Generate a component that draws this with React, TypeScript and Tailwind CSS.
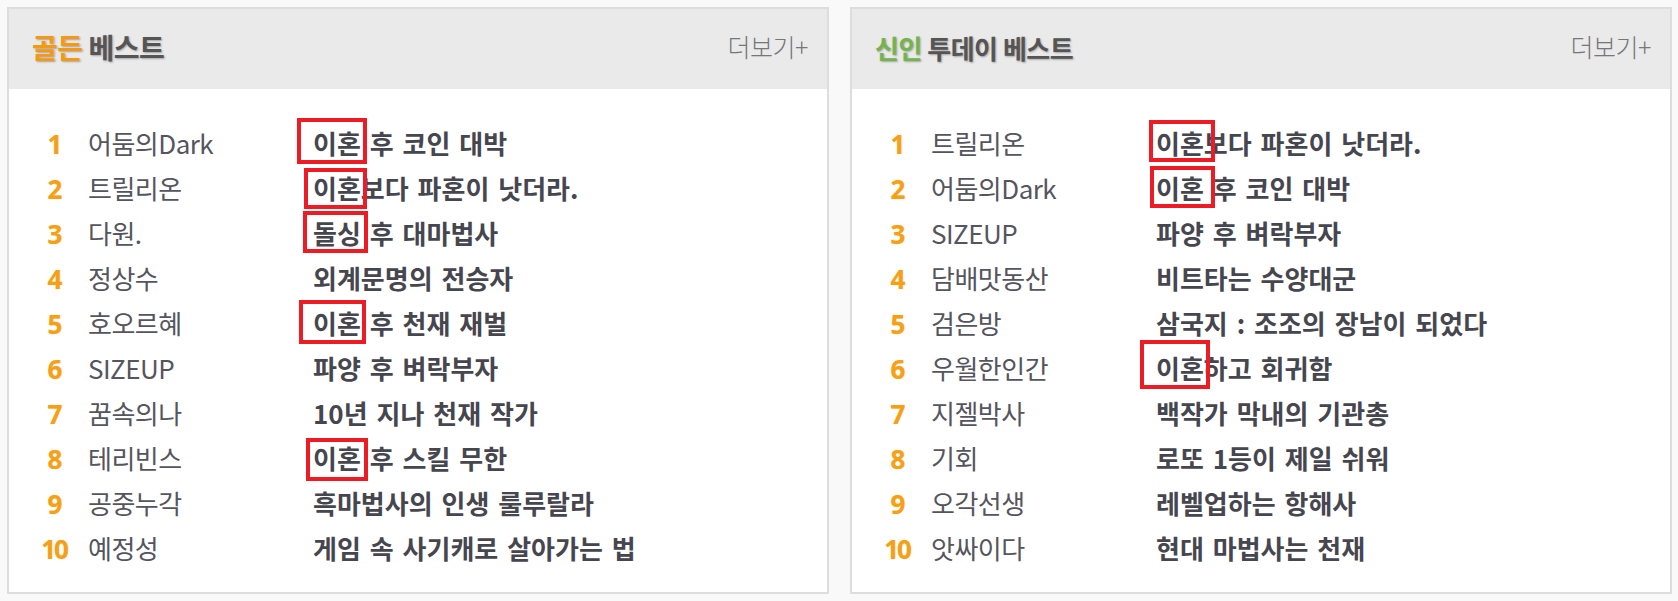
// 베스트 랭킹 패널 두 개 (골든 베스트 / 신인 투데이 베스트)

type RankItem = {
  author: string
  title: string
  // 빨간 박스 표시 (제목 앞부분 강조용)
  box?: string
}

const goldenBest: RankItem[] = [
  { author: '어둠의Dark', title: '이혼 후 코인 대박', box: 'left-[-16px] top-[-2px] w-[70px] h-[46px]' },
  { author: '트릴리온', title: '이혼보다 파혼이 낫더라.', box: 'left-[-9px] top-[3px] w-[63px] h-[41px]' },
  { author: '다원.', title: '돌싱 후 대마법사', box: 'left-[-10px] top-[1px] w-[65px] h-[42px]' },
  { author: '정상수', title: '외계문명의 전승자' },
  { author: '호오르혜', title: '이혼 후 천재 재벌', box: 'left-[-14px] top-[0px] w-[67px] h-[44px]' },
  { author: 'SIZEUP', title: '파양 후 벼락부자' },
  { author: '꿈속의나', title: '10년 지나 천재 작가' },
  { author: '테리빈스', title: '이혼 후 스킬 무한', box: 'left-[-7px] top-[3px] w-[62px] h-[43px]' },
  { author: '공중누각', title: '흑마법사의 인생 룰루랄라' },
  { author: '예정성', title: '게임 속 사기캐로 살아가는 법' },
]

const rookieBest: RankItem[] = [
  { author: '트릴리온', title: '이혼보다 파혼이 낫더라.', box: 'left-[-7px] top-[0px] w-[66px] h-[42px]' },
  { author: '어둠의Dark', title: '이혼 후 코인 대박', box: 'left-[-6px] top-[1px] w-[65px] h-[42px]' },
  { author: 'SIZEUP', title: '파양 후 벼락부자' },
  { author: '담배맛동산', title: '비트타는 수양대군' },
  { author: '검은방', title: '삼국지 : 조조의 장남이 되었다' },
  { author: '우월한인간', title: '이혼하고 회귀함', box: 'left-[-16px] top-[-5px] w-[70px] h-[49px]' },
  { author: '지젤박사', title: '백작가 막내의 기관총' },
  { author: '기회', title: '로또 1등이 제일 쉬워' },
  { author: '오각선생', title: '레벨업하는 항해사' },
  { author: '앗싸이다', title: '현대 마법사는 천재' },
]

const KR = "font-['Noto_Sans_CJK_KR','Noto_Sans',sans-serif]"

function RankPanel({
  accent,
  accentColor,
  rest,
  headSize,
  items,
}: {
  accent: string
  accentColor: string
  rest: string
  headSize: string
  items: RankItem[]
}) {
  return (
    <section className="w-[822px] h-[587px] border-2 border-[#dddddd] bg-white flex flex-col">
      {/* 헤더 */}
      <div className="h-[80px] bg-[#eaeaea] flex items-center justify-between pl-[23px] pr-[19px] pb-[4px]">
        <h2 className={`${KR} ${headSize} font-bold tracking-[-0.5px] [text-shadow:1px_1px_2px_rgba(0,0,0,0.3)]`}>
          <span className={accentColor}>{accent}</span> <span className="text-[#555555]">{rest}</span>
        </h2>
        <a className={`${KR} text-[25px] font-light text-[#777777] tracking-[-0.5px]`}>더보기+</a>
      </div>

      {/* 순위 목록 */}
      <ol className="pt-[28px] pl-[25px]">
        {items.map((item, i) => (
          <li key={i} className="grid grid-cols-[40px_239px_1fr] h-[45px] items-center">
            <span className="font-['Noto_Sans',sans-serif] text-[26px] font-bold text-[#f6a01a] text-center leading-[45px] pt-[5px] tracking-[-2px] [text-shadow:0_0_1px_#fbc56a]">
              {i + 1}
            </span>
            <span className={`${KR} pl-[14px] text-[26px] text-[#55555e] leading-[45px] tracking-[-0.5px]`}>
              {item.author}
            </span>
            <span className={`${KR} relative h-[45px] text-[26px] font-bold text-[#46464f] leading-[45px] [word-spacing:3px]`}>
              {item.box && <span className={`absolute border-4 border-[#ed1c24] ${item.box}`} />}
              {item.title}
            </span>
          </li>
        ))}
      </ol>
    </section>
  )
}

export default function App() {
  return (
    <div className="w-[1678px] h-[601px] bg-[#f9f9f9] flex gap-[21px] pt-[7px] pl-[7px]">
      <RankPanel accent="골든" accentColor="text-[#f39a12]" rest="베스트" headSize="text-[28px]" items={goldenBest} />
      <RankPanel accent="신인" accentColor="text-[#74b44c]" rest="투데이 베스트" headSize="text-[26px]" items={rookieBest} />
    </div>
  )
}
